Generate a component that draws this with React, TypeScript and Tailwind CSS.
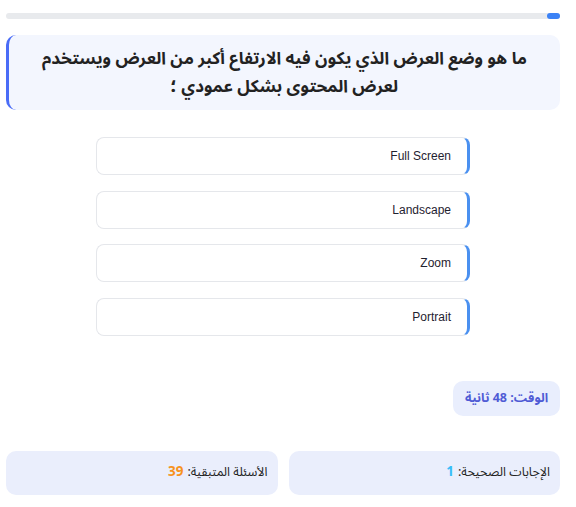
const options = ['Full Screen', 'Landscape', 'Zoom', 'Portrait']

function App() {
    return (
        <div dir="rtl" className="w-[576px] h-[507px] bg-white pl-[6px] pr-[16px] pt-[13px] font-['Noto_Sans_Arabic','Noto_Sans','DejaVu_Sans',sans-serif]">
            <div className="h-[6px] w-full rounded-full bg-[#e8eaed] flex">
                <div className="h-full w-[13px] rounded-full bg-[#3b82f6]" />
            </div>

            <div className="mt-[16px] h-[75px] rounded-[10px] bg-[#f3f6fe] border-l-[3px] border-[#4a6cf7] flex items-center justify-center px-6">
                <p className="text-center text-[17px] leading-[28px] font-bold text-[#222]">
                    ما هو وضع العرض الذي يكون فيه الارتفاع أكبر من العرض ويستخدم لعرض المحتوى بشكل عمودي ؛
                </p>
            </div>

            <div className="mt-[27px] flex flex-col items-center gap-[15.5px]">
                {options.map((o) => (
                    <div key={o} className="w-[374px] h-[38px] rounded-[8px] bg-white border border-[#e5e7eb] border-r-[3px] border-r-[#4a90f0] flex items-center pr-[16px] font-['Liberation_Sans',sans-serif] text-[12px] text-[#1f2230]">
                        {o}
                    </div>
                ))}
            </div>

            <div className="mt-[45px] flex">
                <div className="h-[35px] w-[107px] rounded-[10px] bg-[#e9eefd] flex items-center justify-center text-[12.5px] font-bold text-[#4f5bd5]">
                    الوقت: 48 ثانية
                </div>
            </div>

            <div className="mt-[35px] flex gap-[11px]">
                <div className="flex-1 h-[44px] rounded-[10px] bg-[#eaeefc] flex items-center pr-[10px] text-[12.5px] text-[#222]">
                    الإجابات الصحيحة: <span className="font-bold text-[13.5px] text-[#38bdf8] mr-1">1</span>
                </div>
                <div className="flex-1 h-[44px] rounded-[10px] bg-[#eaeefc] flex items-center pr-[10px] text-[12.5px] text-[#222]">
                    الأسئلة المتبقية: <span className="font-bold text-[13.5px] text-[#f7931e] mr-1">39</span>
                </div>
            </div>
        </div>
    )
}

export default App
